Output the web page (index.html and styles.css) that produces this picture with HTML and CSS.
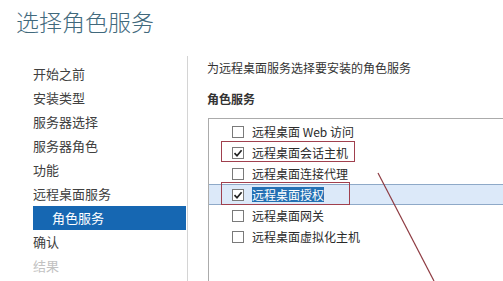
FILE: index.html
```html
<!DOCTYPE html>
<html lang="zh-CN">
<head>
<meta charset="utf-8">
<title>选择角色服务</title>
<link rel="stylesheet" href="styles.css">
</head>
<body>
<header class="header">选择角色服务</header>
<main class="main">
  <nav class="nav">
    <div class="nav-item">开始之前</div>
    <div class="nav-item">安装类型</div>
    <div class="nav-item">服务器选择</div>
    <div class="nav-item">服务器角色</div>
    <div class="nav-item">功能</div>
    <div class="nav-item">远程桌面服务</div>
    <div class="nav-item sub active">角色服务</div>
    <div class="nav-item">确认</div>
    <div class="nav-item disabled">结果</div>
  </nav>
  <section class="content">
    <p class="desc">为远程桌面服务选择要安装的角色服务</p>
    <h2 class="heading">角色服务</h2>
    <div class="list">
      <div class="row"><span class="cb"></span><span class="label">远程桌面 Web 访问</span></div>
      <div class="row"><span class="cb checked"><svg viewBox="0 0 12 12" width="12" height="12"><path d="M2.5 6.2 L5 8.8 L9.6 3.2" fill="none" stroke="#222" stroke-width="1.7"/></svg></span><span class="label">远程桌面会话主机</span><span class="mark mark1"></span></div>
      <div class="row"><span class="cb"></span><span class="label">远程桌面连接代理</span></div>
      <div class="row selected"><span class="cb checked"><svg viewBox="0 0 12 12" width="12" height="12"><path d="M2.5 6.2 L5 8.8 L9.6 3.2" fill="none" stroke="#222" stroke-width="1.7"/></svg></span><span class="label sel">远程桌面授权</span><span class="mark mark2"></span></div>
      <div class="row"><span class="cb"></span><span class="label">远程桌面网关</span></div>
      <div class="row"><span class="cb"></span><span class="label">远程桌面虚拟化主机</span></div>
    </div>
  </section>
</main>
<svg class="arrow" width="503" height="281" viewBox="0 0 503 281"><line x1="378" y1="173" x2="434" y2="281" stroke="#8e3b42" stroke-width="1.2"/></svg>
</body>
</html>
```
FILE: styles.css
```css
* { box-sizing: border-box; }
html, body { margin: 0; padding: 0; }
body {
  width: 503px;
  height: 281px;
  overflow: hidden;
  background: #fff;
  font-family: "Noto Sans CJK SC", "Noto Sans", sans-serif;
  color: #333;
  position: relative;
}
.header {
  height: 56px;
  padding-left: 16px;
  font-size: 23px;
  line-height: 42px;
  color: #41697c;
  font-weight: 300;
}
.main {
  display: flex;
  height: 225px;
}
.nav {
  width: 188px;
  flex: none;
  border-right: 1px solid #d4d4d4;
  padding-top: 6px;
}
.nav-item {
  font-size: 13px;
  line-height: 24px;
  height: 24px;
  padding-left: 33px;
  color: #404040;
  white-space: nowrap;
}
.nav-item.sub {
  margin-left: 33px;
  margin-right: 1px;
  padding-left: 19px;
}
.nav-item.active {
  background: #1667b2;
  color: #fff;
}
.nav-item.disabled { color: #c2c2c2; }
.content {
  flex: 1;
  display: flex;
  flex-direction: column;
  padding-left: 19px;
  padding-top: 3px;
  min-width: 0;
}
.desc {
  margin: 0;
  font-size: 12px;
  line-height: 18px;
  color: #333;
  white-space: nowrap;
}
.heading {
  margin: 13px 0 0;
  font-size: 12px;
  line-height: 18px;
  font-weight: 700;
  color: #333;
}
.list {
  margin-top: 10px;
  margin-left: 1px;
  flex: 1;
  border: 1px solid #ababab;
  border-right: none;
  border-bottom: none;
  padding-top: 2px;
}
.row {
  position: relative;
  height: 21px;
  display: flex;
  align-items: center;
  padding-left: 23px;
  font-size: 12px;
}
.row.selected {
  background: #dce9f9;
  border-top: 1px solid #8ea9c8;
  border-bottom: 1px solid #8ea9c8;
}
.cb {
  width: 12px;
  height: 12px;
  border: 1px solid #7a7a7a;
  background: #fff;
  flex: none;
  display: flex;
  align-items: center;
  justify-content: center;
}
.cb svg { display: block; flex: none; }
.label {
  margin-left: 8px;
  line-height: 15px;
  color: #2a2a2a;
  white-space: nowrap;
}
.label.sel {
  background: #2470b3;
  color: #fff;
}
.mark {
  position: absolute;
  border: 1px solid #a0404e;
}
.mark1 { left: 12px; top: -1px; width: 134px; height: 21px; }
.mark2 { left: 12px; top: -3px; width: 129px; height: 23px; }
.arrow {
  position: absolute;
  left: 0;
  top: 0;
  pointer-events: none;
}
```
